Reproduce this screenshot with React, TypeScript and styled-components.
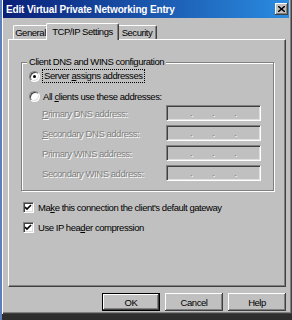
import styled, { createGlobalStyle } from "styled-components";

const Global = createGlobalStyle`
  html, body { margin: 0; padding: 0; }
  body {
    width: 292px;
    height: 320px;
    overflow: hidden;
    background: #2e2e2e;
    font-family: "Liberation Sans", Arial, sans-serif;
    font-size: 9.5px;
    letter-spacing: -0.45px;
    color: #000;
  }
`;

const Desktop = styled.div`
  display: flex;
  width: 292px;
  height: 320px;
  box-sizing: border-box;
  border-left: 2px solid #5d80bb;
`;

const Window = styled.div`
  box-sizing: border-box;
  width: 290px;
  height: 314px;
  padding: 0 3px 3px 1px;
  background: #c0c0c0;
  box-shadow: inset 1px 0 #fff, inset -1px -1px #404040, inset -2px -2px #808080;
  display: flex;
  flex-direction: column;
`;

const TitleBar = styled.div`
  height: 18px;
  flex: none;
  display: flex;
  align-items: center;
  justify-content: space-between;
  padding: 0 1px 0 3px;
  background: linear-gradient(90deg, #0a1f78 0%, #2a8ce0 100%);
`;

const Title = styled.span`
  color: #fff;
  font-weight: bold;
  font-size: 10px;
  letter-spacing: -0.15px;
`;

const CloseButton = styled.div`
  width: 13px;
  height: 12px;
  box-sizing: border-box;
  background: #c0c0c0;
  box-shadow: inset -1px -1px #404040, inset 1px 1px #fff, inset -2px -2px #808080;
  display: flex;
  align-items: center;
  justify-content: center;
`;

const Body = styled.div`
  flex: 1;
  display: flex;
  flex-direction: column;
  padding: 5px 3px 0 5px;
`;

const TabStrip = styled.div`
  height: 16px;
  flex: none;
  display: flex;
  align-items: flex-end;
  padding-left: 5px;
  position: relative;
  z-index: 1;
`;

const Tab = styled.div<{ $selected?: boolean; $w: number }>`
  box-sizing: border-box;
  width: ${(p) => p.$w}px;
  height: ${(p) => (p.$selected ? 17 : 14)}px;
  margin: ${(p) => (p.$selected ? "0 -2px -1px" : "0")};
  padding-top: ${(p) => (p.$selected ? 2 : 1)}px;
  text-align: center;
  background: #c0c0c0;
  border-top: 1px solid #fff;
  border-left: 1px solid #fff;
  border-right: 1px solid #404040;
  border-radius: 2px 2px 0 0;
  box-shadow: inset -1px 0 #808080;
  position: relative;
  z-index: ${(p) => (p.$selected ? 2 : 1)};
  line-height: 11px;
`;

const Panel = styled.div`
  flex: 1;
  box-sizing: border-box;
  display: flex;
  flex-direction: column;
  padding: 22px 9px 0 12px;
  border-top: 1px solid #fff;
  border-left: 1px solid #fff;
  border-right: 1px solid #404040;
  border-bottom: 1px solid #404040;
  box-shadow: inset -1px -1px #808080;
`;

const Group = styled.div`
  position: relative;
  box-sizing: border-box;
  width: 253px;
  height: 129px;
  border: 1px solid #808080;
  box-shadow: 1px 1px 0 #fff, inset 1px 1px 0 #fff;
  display: flex;
  flex-direction: column;
  padding: 6px 0 0 7px;
`;

const GroupLabel = styled.span`
  position: absolute;
  top: -7px;
  left: 5px;
  padding: 0 2px;
  background: #c0c0c0;
  line-height: 12px;
`;

const RadioRow = styled.div<{ $gap: number }>`
  height: 14px;
  display: flex;
  align-items: center;
  gap: 3px;
  margin-bottom: ${(p) => p.$gap}px;
`;

const Radio = styled.span<{ $on?: boolean }>`
  width: 11px;
  height: 11px;
  box-sizing: border-box;
  border-radius: 50%;
  background: #fff;
  border: 1px solid;
  border-color: #808080 #fff #fff #808080;
  box-shadow: inset 1px 1px #404040, inset -1px -1px #dfdfdf;
  display: flex;
  align-items: center;
  justify-content: center;
  &::after {
    content: "";
    display: ${(p) => (p.$on ? "block" : "none")};
    width: 3px;
    height: 3px;
    border-radius: 50%;
    background: #000;
  }
`;

const Focus = styled.span`
  outline: 1px dotted #000;
  padding: 0 1px;
  line-height: 12px;
`;

const FieldRow = styled.div`
  height: 16px;
  display: flex;
  align-items: center;
  padding-left: 13px;
  margin-bottom: 4px;
`;

const Disabled = styled.span`
  width: 124px;
  color: #808080;
  text-shadow: 1px 1px 0 #fff;
`;

const AddressBox = styled.div`
  box-sizing: border-box;
  width: 95px;
  height: 16px;
  border: 1px solid;
  border-color: #808080 #fff #fff #808080;
  box-shadow: inset 1px 1px #404040, inset -1px -1px #dfdfdf;
  display: flex;
  align-items: center;
  gap: 19px;
  padding: 0 0 2px 23px;
`;

const Dot = styled.span`
  color: #808080;
  text-shadow: 1px 1px 0 #fff;
  width: 3px;
`;

const CheckRow = styled.div<{ $top: number }>`
  height: 14px;
  display: flex;
  align-items: center;
  gap: 4px;
  margin: ${(p) => p.$top}px 0 0 2px;
`;

const CheckBox = styled.span`
  width: 11px;
  height: 11px;
  box-sizing: border-box;
  background: #fff;
  border: 1px solid;
  border-color: #808080 #fff #fff #808080;
  box-shadow: inset 1px 1px #404040, inset -1px -1px #dfdfdf;
  display: flex;
  align-items: center;
  justify-content: center;
`;

const ButtonBar = styled.div`
  height: 18px;
  margin-top: 6px;
  flex: none;
  display: flex;
  justify-content: flex-end;
  gap: 5px;
`;

const Button = styled.div<{ $default?: boolean }>`
  width: 58px;
  height: 18px;
  box-sizing: border-box;
  display: flex;
  align-items: center;
  justify-content: center;
  background: #c0c0c0;
  border: ${(p) => (p.$default ? "1px solid #000" : "none")};
  box-shadow: inset -1px -1px #404040, inset 1px 1px #fff, inset -2px -2px #808080;
`;

const Check = () => (
  <svg width="7" height="7" viewBox="0 0 7 7">
    <path d="M0 3 L2 5 L6 1" stroke="#000" strokeWidth="1.6" fill="none" />
  </svg>
);

const fields = [
  ["P", "rimary DNS address:"],
  ["S", "econdary DNS address:"],
  ["", "Primary WINS address:"],
  ["", "Secondary WINS address:"],
];

export default function App() {
  return (
    <>
      <Global />
      <Desktop>
        <Window>
          <TitleBar>
            <Title>Edit Virtual Private Networking Entry</Title>
            <CloseButton>
              <svg width="7" height="6" viewBox="0 0 7 6">
                <path d="M0 0 L7 6 M7 0 L0 6" stroke="#000" strokeWidth="1.4" />
              </svg>
            </CloseButton>
          </TitleBar>
          <Body>
            <TabStrip>
              <Tab $w={35}>General</Tab>
              <Tab $w={73} $selected>TCP/IP Settings</Tab>
              <Tab $w={40}>Security</Tab>
            </TabStrip>
            <Panel>
              <Group>
                <GroupLabel>Client DNS and WINS configuration</GroupLabel>
                <RadioRow $gap={6}>
                  <Radio $on />
                  <Focus>
                    Server <u>a</u>ssigns addresses
                  </Focus>
                </RadioRow>
                <RadioRow $gap={2}>
                  <Radio />
                  <span>
                    All <u>c</u>lients use these addresses:
                  </span>
                </RadioRow>
                {fields.map(([k, rest]) => (
                  <FieldRow key={rest}>
                    <Disabled>
                      {k && <u>{k}</u>}
                      {rest}
                    </Disabled>
                    <AddressBox>
                      <Dot>.</Dot>
                      <Dot>.</Dot>
                      <Dot>.</Dot>
                    </AddressBox>
                  </FieldRow>
                ))}
              </Group>
              <CheckRow $top={9}>
                <CheckBox>
                  <Check />
                </CheckBox>
                <span>
                  Ma<u>k</u>e this connection the client's default gateway
                </span>
              </CheckRow>
              <CheckRow $top={6}>
                <CheckBox>
                  <Check />
                </CheckBox>
                <span>
                  Use IP hea<u>d</u>er compression
                </span>
              </CheckRow>
            </Panel>
            <ButtonBar>
              <Button $default>OK</Button>
              <Button>Cancel</Button>
              <Button>Help</Button>
            </ButtonBar>
          </Body>
        </Window>
      </Desktop>
    </>
  );
}
